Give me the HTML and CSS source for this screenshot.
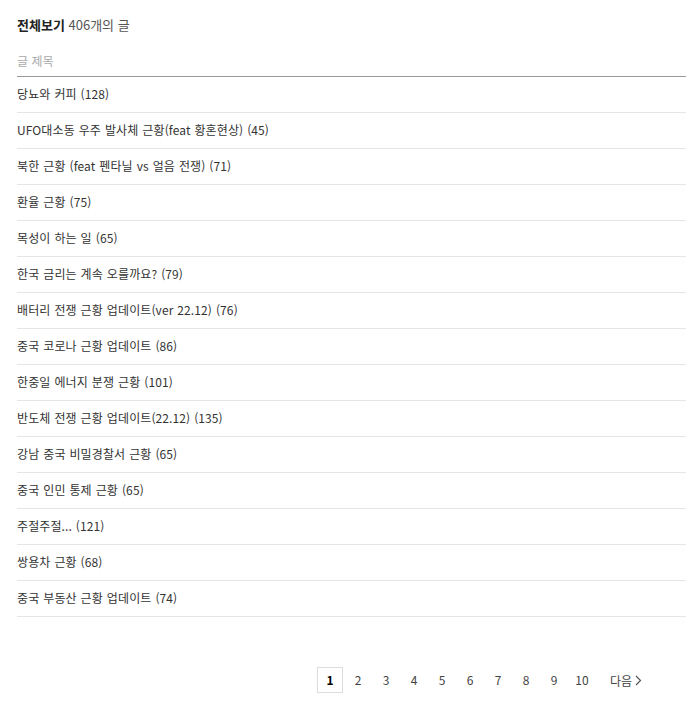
FILE: index.html
```html
<!DOCTYPE html>
<html lang="ko">
<head>
<meta charset="utf-8">
<link rel="stylesheet" href="styles.css">
</head>
<body>
<div class="wrap">
  <h2 class="title"><strong>전체보기</strong> <span class="count">406개의 글</span></h2>
  <div class="thead">글 제목</div>
  <ul class="list">
    <li>당뇨와 커피 (128)</li>
    <li>UFO대소동 우주 발사체 근황(feat 황혼현상) (45)</li>
    <li>북한 근황 (feat 펜타닐 vs 얼음 전쟁) (71)</li>
    <li>환율 근황 (75)</li>
    <li>목성이 하는 일 (65)</li>
    <li>한국 금리는 계속 오를까요? (79)</li>
    <li>배터리 전쟁 근황 업데이트(ver 22.12) (76)</li>
    <li>중국 코로나 근황 업데이트 (86)</li>
    <li>한중일 에너지 분쟁 근황 (101)</li>
    <li>반도체 전쟁 근황 업데이트(22.12) (135)</li>
    <li>강남 중국 비밀경찰서 근황 (65)</li>
    <li>중국 인민 통제 근황 (65)</li>
    <li>주절주절... (121)</li>
    <li>쌍용차 근황 (68)</li>
    <li>중국 부동산 근황 업데이트 (74)</li>
  </ul>
  <div class="pager">
    <span class="page current">1</span>
    <span class="page">2</span>
    <span class="page">3</span>
    <span class="page">4</span>
    <span class="page">5</span>
    <span class="page">6</span>
    <span class="page">7</span>
    <span class="page">8</span>
    <span class="page">9</span>
    <span class="page">10</span>
    <span class="next">다음 <svg width="7" height="11" viewBox="0 0 7 11"><path d="M1 1l4.5 4.5L1 10" fill="none" stroke="#555" stroke-width="1.2"/></svg></span>
  </div>
</div>
</body>
</html>
```
FILE: styles.css
```css
html, body {
  margin: 0;
  padding: 0;
  background: #fff;
}
body {
  font-family: "Noto Sans CJK KR", "Noto Sans", sans-serif;
  color: #333;
}
.wrap {
  padding-left: 17px;
}
.title {
  margin: 0;
  padding-top: 16px;
  font-size: 13px;
  line-height: 17px;
  padding-bottom: 1px;
  font-weight: normal;
  color: #222;
}
.title strong {
  font-weight: bold;
}
.count {
  color: #555;
}
.thead {
  margin-top: 18px;
  font-size: 12px;
  line-height: 17px;
  color: #aaa;
  padding-bottom: 7px;
  border-bottom: 1px solid #999;
}
.list {
  list-style: none;
  margin: 0;
  padding: 0;
}
.list li {
  box-sizing: border-box;
  height: 36px;
  line-height: 34px;
  padding-bottom: 1px;
  font-size: 12px;
  letter-spacing: 0.1px;
  word-spacing: 0.5px;
  color: #333;
  border-bottom: 1px solid #e5e5e5;
}
.pager {
  display: flex;
  align-items: center;
  margin-top: 50px;
  padding-left: 300px;
  font-size: 12px;
  color: #444;
}
.page {
  width: 26px;
  height: 26px;
  line-height: 25px;
  text-align: center;
  margin-right: 2px;
  box-sizing: border-box;
}
.page.current {
  border: 1px solid #ddd;
  color: #000;
  font-weight: bold;
  line-height: 23px;
}
.next {
  margin-left: 13px;
  display: flex;
  align-items: center;
  gap: 3px;
}
```
